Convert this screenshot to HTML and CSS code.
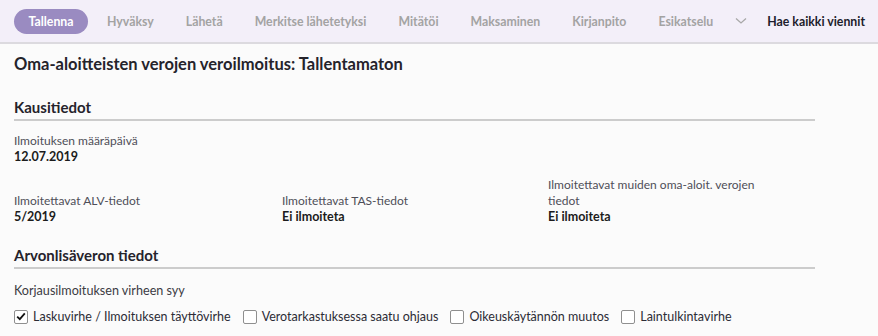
FILE: index.html
```html
<!DOCTYPE html>
<html lang="fi">
<head>
<meta charset="utf-8">
<title>Oma-aloitteisten verojen veroilmoitus</title>
<link rel="stylesheet" href="styles.css">
</head>
<body>
<nav class="toolbar">
  <button class="nav-btn primary">Tallenna</button>
  <button class="nav-btn">Hyväksy</button>
  <button class="nav-btn">Lähetä</button>
  <button class="nav-btn">Merkitse lähetetyksi</button>
  <button class="nav-btn">Mitätöi</button>
  <button class="nav-btn">Maksaminen</button>
  <button class="nav-btn">Kirjanpito</button>
  <button class="nav-btn">Esikatselu</button>
  <button class="nav-more" aria-label="Lisää">
    <svg width="12" height="8" viewBox="0 0 12 8"><path d="M1 1.5 L6 6 L11 1.5" fill="none" stroke="#a8a8a8" stroke-width="1.3"/></svg>
  </button>
  <button class="nav-btn dark">Hae kaikki viennit</button>
</nav>
<main class="content">
  <h1 class="title">Oma-aloitteisten verojen veroilmoitus: Tallentamaton</h1>

  <section class="section">
    <h2 class="section-title">Kausitiedot</h2>
    <div class="field">
      <div class="label">Ilmoituksen määräpäivä</div>
      <div class="value">12.07.2019</div>
    </div>
    <div class="field-row">
      <div class="field">
        <div class="label">Ilmoitettavat ALV-tiedot</div>
        <div class="value">5/2019</div>
      </div>
      <div class="field">
        <div class="label">Ilmoitettavat TAS-tiedot</div>
        <div class="value">Ei ilmoiteta</div>
      </div>
      <div class="field">
        <div class="label narrow">Ilmoitettavat muiden oma-aloit. verojen tiedot</div>
        <div class="value">Ei ilmoiteta</div>
      </div>
    </div>
  </section>

  <section class="section">
    <h2 class="section-title">Arvonlisäveron tiedot</h2>
    <div class="group-label">Korjausilmoituksen virheen syy</div>
    <div class="checks">
      <label class="check"><span class="box checked"><svg width="10" height="9" viewBox="0 0 10 9"><path d="M1.2 4.6 L3.8 7.2 L8.8 1.4" fill="none" stroke="#111" stroke-width="1.8"/></svg></span>Laskuvirhe / Ilmoituksen täyttövirhe</label>
      <label class="check"><span class="box"></span>Verotarkastuksessa saatu ohjaus</label>
      <label class="check"><span class="box"></span>Oikeuskäytännön muutos</label>
      <label class="check"><span class="box"></span>Laintulkintavirhe</label>
    </div>
  </section>
</main>
</body>
</html>
```
FILE: styles.css
```css
* { box-sizing: border-box; }
html, body { margin: 0; padding: 0; }
body {
  background: #fbfbfb;
  font-family: Lato, "Liberation Sans", sans-serif;
  color: #1f1f1f;
  width: 878px;
  height: 336px;
  overflow: hidden;
}
.toolbar {
  display: flex;
  align-items: center;
  height: 44px;
  padding: 0 0 0 14px;
  background: #f3eff9;
  border-bottom: 2px solid #dcdadf;
  white-space: nowrap;
}
.nav-btn {
  flex-shrink: 0;
  white-space: nowrap;
  font-family: inherit;
  font-size: 12.3px;
  font-weight: 700;
  color: #a3a3a3;
  background: none;
  border: 0;
  padding: 0 16px;
  height: 25px;
  line-height: 25px;
  cursor: pointer;
}
.nav-btn.primary {
  background: #9a8bc1;
  color: #fff;
  border-radius: 13px;
  padding: 0;
  width: 74px;
  margin-right: 3px;
}
.nav-btn.dark { color: #1d1d2c; padding: 0 14px 0 20px; }
.nav-more {
  flex-shrink: 0;
  background: none;
  border: 0;
  padding: 0 0 0 6px;
  height: 25px;
  display: flex;
  align-items: center;
}
.content {
  padding: 8px 0 0 14px;
  width: 815px;
}
.title {
  margin: 0;
  font-size: 16.5px;
  font-weight: 700;
  color: #25232b;
  line-height: 24px;
}
.section { margin-top: 21px; }
.section + .section { margin-top: 21px; }
.section-title {
  margin: 0;
  font-size: 15px;
  font-weight: 700;
  color: #25232b;
  line-height: 20px;
  padding-bottom: 2px;
  border-bottom: 2px solid #cccccc;
}
.section-title + .field { margin-top: 12px; }
.label {
  font-size: 12px;
  color: #4e4e58;
  line-height: 16px;
}
.label.narrow { width: 230px; }
.value {
  font-size: 12.5px;
  font-weight: 700;
  color: #1c1c1c;
  line-height: 15px;
}
.field-row {
  display: grid;
  grid-template-columns: 268px 266px 1fr;
  align-items: end;
  margin-top: 13px;
}
.group-label {
  margin-top: 13px;
  font-size: 12.6px;
  color: #3b3b44;
  line-height: 18px;
}
.checks {
  display: flex;
  gap: 12px;
  margin-top: 9px;
}
.check {
  display: flex;
  align-items: center;
  gap: 5px;
  font-size: 12.5px;
  color: #2c2c36;
}
.box {
  width: 14px;
  height: 14px;
  border: 1px solid #8f8f8f;
  border-radius: 2px;
  background: #fff;
  display: flex;
  align-items: center;
  justify-content: center;
}
```
